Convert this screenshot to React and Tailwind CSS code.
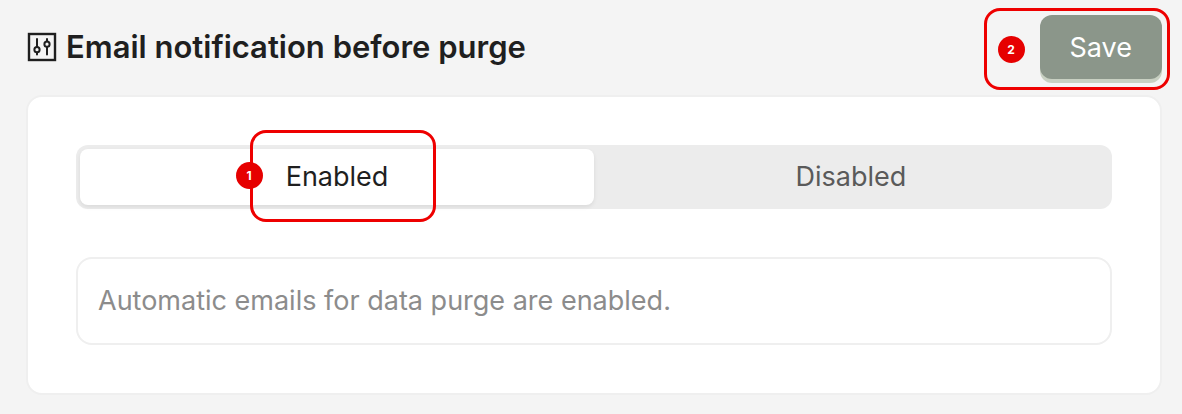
import React, { useState } from "react";

const OPTIONS = ["Enabled", "Disabled"];

function SlidersIcon() {
  return (
    <svg width="32" height="32" viewBox="0 0 32 32" fill="none" stroke="#1f1f1f" strokeWidth="2" aria-hidden="true">
      <rect x="3" y="3" width="26" height="26" strokeWidth="2.4" />
      <g strokeLinecap="round">
        <path d="M11 8v8M11 21.5v2" />
        <circle cx="11" cy="18.7" r="2.6" />
        <path d="M21 8v2.2M21 16v7.5" />
        <circle cx="21" cy="13.2" r="2.6" />
      </g>
    </svg>
  );
}

function StepBadge({ number, className }) {
  return (
    <span
      className={`absolute z-10 flex size-[27px] items-center justify-center rounded-full bg-[#e60000] text-xs font-bold text-white ${className}`}
    >
      {number}
    </span>
  );
}

export default function App() {
  const [selected, setSelected] = useState("Enabled");

  return (
    <main className="min-h-screen bg-[#f4f4f4] pt-[15px] pr-5 pb-5 pl-[26px] font-['Inter',sans-serif] text-[#1f1f1f]">
      <header className="mb-4 flex items-center justify-between">
        <h1 className="flex items-center gap-2 text-[31px] leading-10 font-semibold">
          <SlidersIcon />
          Email notification before purge
        </h1>

        <div className="relative">
          <button
            type="button"
            className="h-16 cursor-pointer rounded-xl bg-[#8b968a] px-[30px] pt-0.5 text-[27px] leading-10 text-white shadow-[0_4px_0_#c8d0c2]"
          >
            Save
          </button>
          <span className="pointer-events-none absolute -top-[7px] -right-2 -bottom-[11px] -left-14 rounded-2xl border-[3px] border-[#ee0000]">
            <StepBadge number={2} className="top-[25px] left-[11px]" />
          </span>
        </div>
      </header>

      <section className="flex flex-col gap-12 rounded-2xl border-2 border-[#efefef] bg-white p-12">
        <div role="radiogroup" aria-label="Email notification before purge" className="flex rounded-xl bg-[#ececec] p-1">
          {OPTIONS.map((option) => (
            <label
              key={option}
              className={`flex flex-1 cursor-pointer items-center justify-center rounded-lg py-2 text-[27px] leading-10 ${
                selected === option
                  ? "bg-white text-[#1f1f1f] shadow-[0_2px_4px_rgba(0,0,0,0.08)]"
                  : "text-[#5a5a5a]"
              }`}
            >
              <input
                type="radio"
                name="purge-email"
                value={option}
                checked={selected === option}
                onChange={() => setSelected(option)}
                className="sr-only"
              />
              <span className="relative">
                {option}
                {option === "Enabled" && (
                  <span className="pointer-events-none absolute -top-[27px] -right-12 -bottom-[25px] -left-9 rounded-2xl border-[3px] border-[#ee0000]">
                    <StepBadge number={1} className="top-[29px] -left-[17px]" />
                  </span>
                )}
              </span>
            </label>
          ))}
        </div>

        <p role="status" className="rounded-2xl border-2 border-[#efefef] px-5 py-[22px] text-[27px] leading-10 text-[#8c8c8c]">
          Automatic emails for data purge are {selected.toLowerCase()}.
        </p>
      </section>
    </main>
  );
}
